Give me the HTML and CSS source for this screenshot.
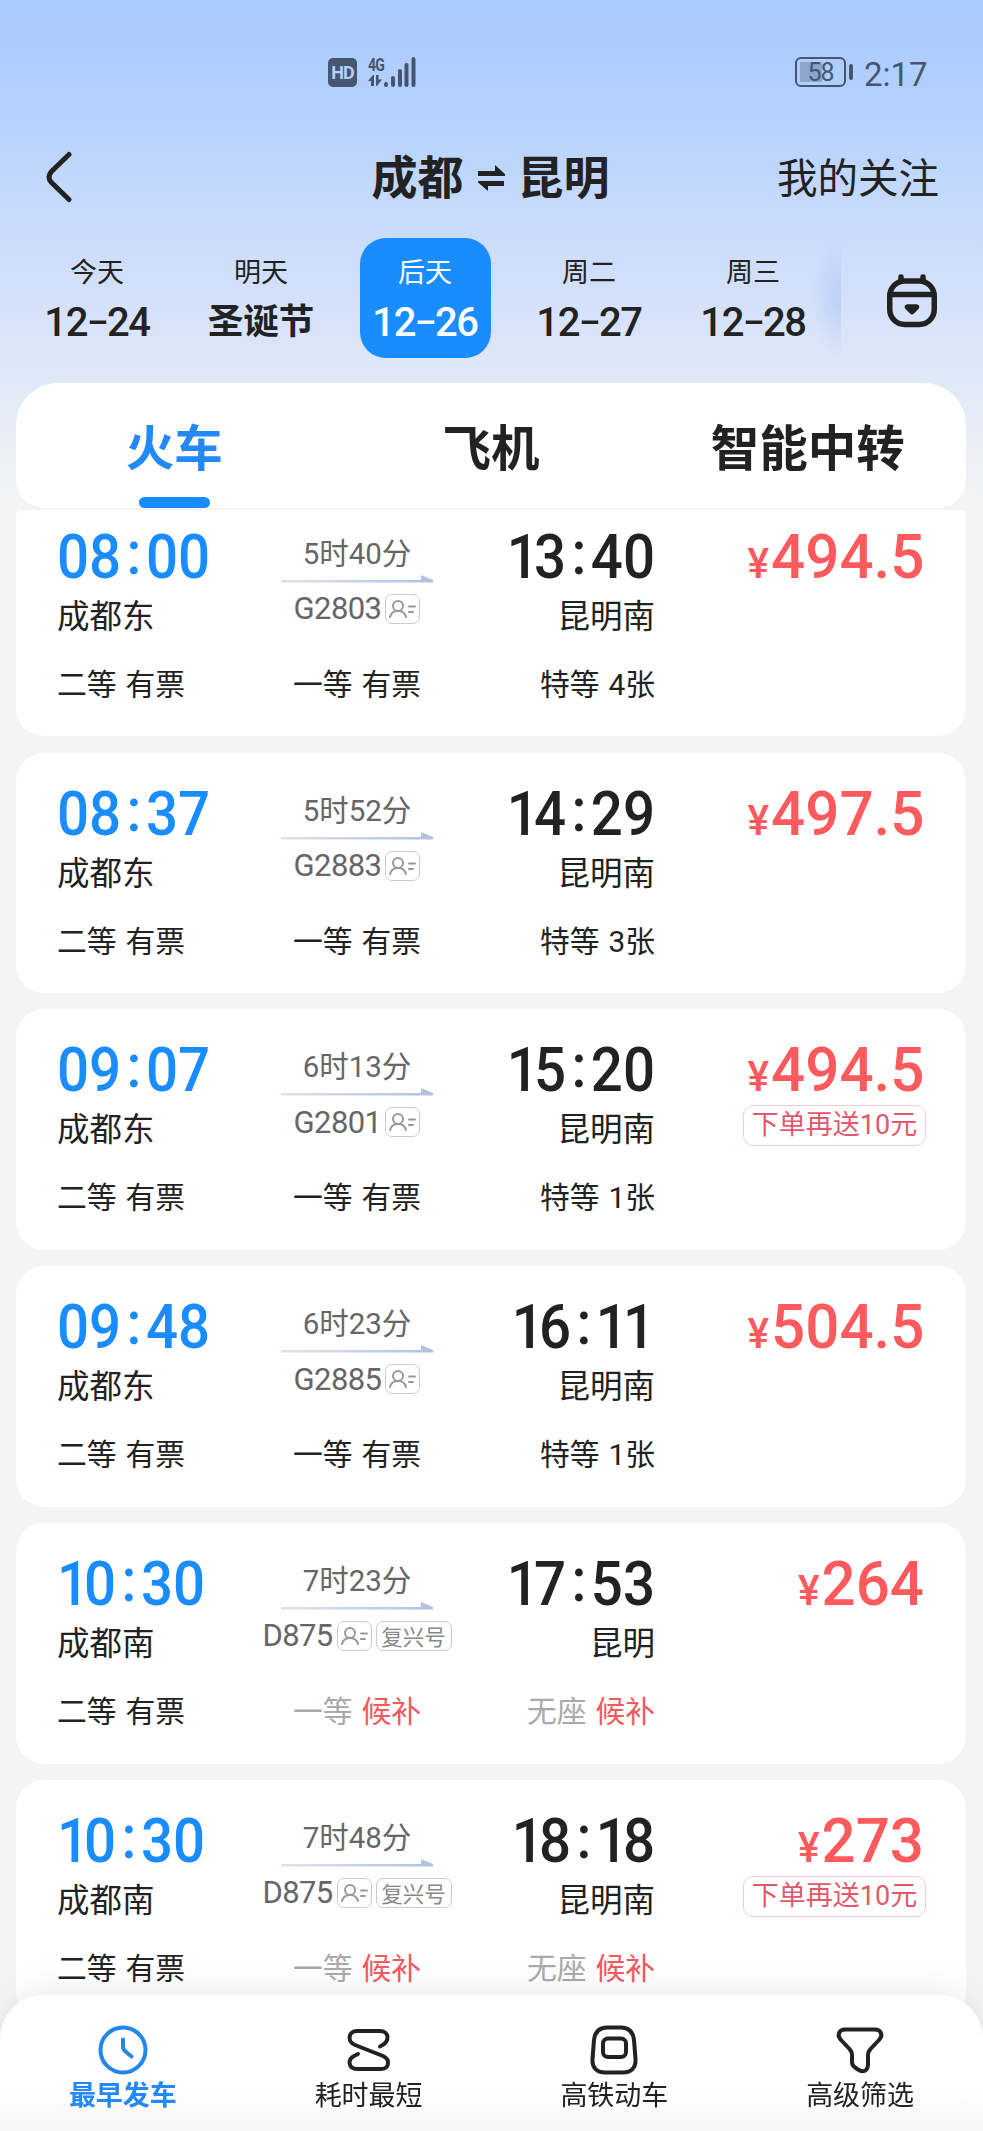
FILE: index.html
```html
<!DOCTYPE html>
<html lang="zh-CN">
<head>
    <meta charset="UTF-8">
    <meta name="viewport" content="width=device-width, initial-scale=1.0">
    <title>成都 - 昆明</title>
    <link rel="stylesheet" href="styles.css">
</head>
<body>
    <header>
        <div class="status-bar">
            <div class="signal">
                <span class="hd">HD</span>
                <span class="network">
                    <span class="network-type">4G</span>
                    <svg width="14" height="12" viewBox="0 0 14 12" fill="#46566f"><path d="M0 6L5 0h1v11H3V6zM8 0h2.6v4.5H14L9 11H8z"/></svg>
                </span>
                <svg class="bars" width="32" height="30" viewBox="0 0 32 30" stroke="#46566f" stroke-width="4" stroke-linecap="round"><path d="M2 27v1M9 21v7M16 14v14M22.500 8v20M29.500 2v26"/></svg>
            </div>
            <div class="power">
                <span class="battery"><span>58</span></span>
                <span class="battery-cap"></span>
                <span class="clock">2:17</span>
            </div>
        </div>

        <div class="title-bar">
            <svg width="28" height="54" viewBox="0 0 28 54" fill="none" stroke="#222" stroke-width="5" stroke-linecap="round"><path d="M23 4.500L5.500 21.500q-5 5.500 0 11L23 49.500"/></svg>
            <h1>
                <span>成都</span>
                <svg width="28" height="28" viewBox="0 0 28 28" fill="#222"><path d="M1 7h17V1l10 9v2H1zM27 17v5H11v5L1 18.500V17z"/></svg>
                <span>昆明</span>
            </h1>
            <a class="follow">我的关注</a>
        </div>

        <div class="date-bar">
            <div class="dates">
                <div class="date"><span>今天</span><b>12<i>-</i>24</b></div>
                <div class="date"><span>明天</span><b class="festival">圣诞节</b></div>
                <div class="date active"><span>后天</span><b>12<i>-</i>26</b></div>
                <div class="date"><span>周二</span><b>12<i>-</i>27</b></div>
                <div class="date"><span>周三</span><b>12<i>-</i>28</b></div>
            </div>
            <div class="calendar">
                <svg width="50" height="54" viewBox="0 0 50 54" fill="none" stroke="#222" stroke-width="5.500" stroke-linecap="round"><rect x="2.750" y="7" width="44.500" height="43.500" rx="15"/><path d="M14 3v4M36 3v4M4 20.500h42"/><path d="M20.500 33h9L25 37.500z" fill="#222" stroke-linejoin="round"/></svg>
            </div>
        </div>

        <nav class="tabs">
            <a class="tab active">火车</a>
            <a class="tab">飞机</a>
            <a class="tab">智能中转</a>
        </nav>
    </header>

    <main id="trainList"></main>

    <footer>
        <div class="sort active">
            <svg width="50" height="50" viewBox="0 0 50 50" fill="none" stroke="#2386ee" stroke-width="4" stroke-linecap="round"><circle cx="25" cy="25" r="22.500"/><path d="M25 14.500v7q0 3 2.500 5l6 5"/></svg>
            <span>最早发车</span>
        </div>
        <div class="sort">
            <svg width="50" height="50" viewBox="0 0 50 50" fill="none" stroke="#222" stroke-width="4" stroke-linecap="round"><path d="M36 21.500c11-5 9-15.500 0-15.500H13C4 6 3 17 11 20l28 11c8 4 6 13-2 13H13c-9 0-10-10-2-13.500l3-1.500"/></svg>
            <span>耗时最短</span>
        </div>
        <div class="sort">
            <svg width="50" height="50" viewBox="0 0 50 50" fill="none" stroke="#222" stroke-width="4"><path d="M18 2.500h14C40 2.500 44 7 45 15l1.500 19C47 43 42 47.500 34 47.500H16C8 47.500 3 43 3.500 34L5 15c1-8 5-12.500 13-12.500z"/><rect x="14" y="13.500" width="23" height="18.500" rx="5"/></svg>
            <span>高铁动车</span>
        </div>
        <div class="sort">
            <svg width="50" height="50" viewBox="0 0 50 50" fill="none" stroke="#222" stroke-width="4" stroke-linejoin="round"><path d="M10 4.500h30c6 0 8.500 6 4 10.500L35.500 24c-2 2-2.500 3-2.500 6v9c0 7-5 9-10 5.500l-3-2c-2-1.500-3-3-3-5.500v-7c0-3-.5-4-2.500-6L6 15C1.500 10.500 4 4.500 10 4.500z"/></svg>
            <span>高级筛选</span>
        </div>
    </footer>

    <script src="script.js"></script>
</body>
</html>
```

FILE: styles.css
```css
* {
    box-sizing: border-box;
}
body {
    margin: 0;
    height: 2131px;
    overflow: hidden;
    font-family: Roboto, "Noto Sans CJK SC", sans-serif;
    color: #222;
    background: linear-gradient(#a9cafd 0, #b3d0fe 100px, #c8dbfb 220px, #d3e0fb 290px, #e0e9f8 380px, #f4f4f4 505px);
}
svg {
    display: block;
    flex: none;
}
header {
    height: 508px;
}
.status-bar {
    display: flex;
    justify-content: space-between;
    height: 115px;
    padding: 57px 55px 0 328px;
    color: #46566f;
}
.signal, .power {
    display: flex;
    height: 30px;
}
.hd {
    width: 29px;
    height: 29px;
    margin-top: 1px;
    border-radius: 5px;
    background-color: #46566f;
    color: #b3d0fe;
    font-size: 18px;
    font-weight: 700;
    line-height: 30px;
    text-align: center;
    letter-spacing: -1px;
}
.network {
    width: 17px;
    margin-left: 11px;
}
.network-type {
    display: block;
    height: 18px;
    font-size: 18px;
    font-weight: 700;
    line-height: 16px;
    letter-spacing: -1px;
    transform: scaleX(0.78);
    transform-origin: left;
}
.bars {
    margin-left: -1px;
}
.battery {
    width: 51px;
    height: 30px;
    border: 2.5px solid #46566f;
    border-radius: 6px;
    padding: 3px;
    font-size: 25px;
    line-height: 21px;
    text-align: center;
}
.battery span {
    display: block;
    height: 20px;
    letter-spacing: -1px;
    background: linear-gradient(90deg, #8ca5cf 22px, transparent 22px);
}
.battery-cap {
    width: 4px;
    height: 16px;
    margin: 7px 11px 0 3px;
    border-radius: 2px;
    background-color: #46566f;
}
.clock {
    width: 64px;
    font-size: 33px;
    line-height: 35px;
    white-space: nowrap;
}
.title-bar {
    display: flex;
    align-items: center;
    justify-content: space-between;
    height: 122px;
    padding: 1px 44px 0 46px;
}
h1 {
    display: flex;
    align-items: center;
    gap: 13px;
    margin: 0 0 0 130px;
    padding-top: 3px;
    font-size: 46px;
    line-height: 60px;
}
.follow {
    padding-bottom: 3px;
    font-size: 40.5px;
}
.date-bar {
    display: flex;
    height: 120px;
    padding-left: 15px;
}
.dates {
    display: flex;
    width: 826px;
    margin-top: 1px;
    position: relative;
}
/* fade at the scroll edge */
.dates:after {
    content: '';
    position: absolute;
    right: 0;
    top: 0;
    width: 30px;
    height: 120px;
    background: radial-gradient(ellipse at right, rgba(170, 197, 243, 0.6), rgba(170, 197, 243, 0) 70%);
}
.date {
    display: flex;
    flex-direction: column;
    align-items: center;
    width: 131px;
    height: 120px;
    margin: 0 16.5px;
    border-radius: 26px;
    flex: none;
}
.date.active {
    background-color: #198cff;
    color: white;
}
.date span {
    margin-top: 17px;
    font-size: 27px;
    line-height: 36px;
}
.date b {
    font-size: 40px;
    font-weight: 500;
    line-height: 62px;
    letter-spacing: -1.4px;
}
.date i {
    display: inline-block;
    width: 20px;
    text-align: center;
    font-style: normal;
    transform: scale(1.6, 0.9);
    vertical-align: 1px;
}
.date .festival {
    font-size: 35.5px;
    font-weight: 700;
    letter-spacing: 0;
}
.calendar {
    padding: 37px 0 0 46px;
}
.tabs {
    display: flex;
    height: 125px;
    margin: 26px 17px 0 16px;
    border-radius: 42px 42px 28px 28px;
    background-color: white;
}
.tab {
    display: flex;
    flex-direction: column;
    align-items: center;
    flex: 1;
    font-size: 48.5px;
    font-weight: 700;
    line-height: 133px;
}
.tab.active {
    color: #2389f6;
}
.tab.active:after {
    content: '';
    width: 71px;
    height: 11px;
    margin-top: -19px;
    border-radius: 6px;
    background-color: #198cff;
}
main {
    display: flex;
    flex-direction: column;
    gap: 16.2px;
    height: 1623px;
    padding: 2px 17px 0 16px;
    background-color: #f4f4f4;
    overflow: hidden;
}
.train {
    flex: none;
    height: 240.6px;
    padding: 28px 42px 0 41px;
    border-radius: 28px;
    background-color: white;
}
/* the first card is scrolled partly under the tabs */
.train:first-child {
    height: 226.4px;
    padding-top: 13.8px;
    border-radius: 5px 5px 28px 28px;
}
.trip, .seats {
    display: grid;
    grid-template-columns: 200px 200px 198px 1fr;
}
.trip {
    height: 138px;
}
.time {
    height: 64px;
    font-size: 62px;
    font-weight: 500;
    line-height: 65px;
    white-space: nowrap;
    transform: scaleX(0.91);
    transform-origin: left;
}
.depart .time {
    color: #198cff;
}
.arrive .time {
    transform-origin: right;
}
.time .one {
    letter-spacing: -5.5px;
}
.time .colon {
    margin: 0 5px 0 6px;
    vertical-align: 4px;
    line-height: 0;
}
.arrive {
    text-align: right;
}
.station {
    padding-top: 2px;
    font-size: 32.5px;
    line-height: 55px;
}
.line {
    display: flex;
    flex-direction: column;
    align-items: center;
    color: #666;
}
.duration {
    height: 51px;
    padding-top: 9px;
    font-size: 29.5px;
    line-height: 42px;
}
.number {
    display: flex;
    align-items: center;
    height: 36px;
    margin-top: 8px;
    font-size: 31px;
    letter-spacing: -0.6px;
}
.card-tag, .fuxing {
    display: flex;
    align-items: center;
    justify-content: center;
    width: 35px;
    height: 30px;
    margin-left: 4px;
    border: 1.5px solid #ccc;
    border-radius: 7px;
}
.fuxing {
    width: 76px;
    color: #888;
    font-size: 21.5px;
    letter-spacing: 0;
}
.price {
    display: flex;
    flex-direction: column;
    align-items: flex-end;
    color: #fc5a5c;
}
.price .amount {
    height: 68px;
    font-size: 62px;
    font-weight: 500;
    line-height: 65px;
    transform: scaleX(0.97);
    transform-origin: right;
}
.price small {
    margin-right: 2px;
    font-size: 42px;
}
.promo {
    width: 183px;
    height: 41px;
    margin-right: -2px;
    border: 1.5px solid #f9c9d1;
    border-radius: 10px;
    color: #e2596b;
    font-size: 27px;
    line-height: 39px;
    text-align: center;
    white-space: nowrap;
}
.seats {
    padding-top: 1px;
    font-size: 29.8px;
    line-height: 44px;
    word-spacing: 1.5px;
}
.seats div:nth-child(2) {
    text-align: center;
}
.seats div:nth-child(3) {
    text-align: right;
}
.waiting {
    color: #aaa;
}
.waiting span {
    color: #f25a5e;
}
footer {
    position: fixed;
    left: 0;
    right: 0;
    bottom: 0;
    display: flex;
    height: 136px;
    padding-top: 30px;
    border-radius: 44px 44px 0 0;
    background: linear-gradient(white 70%, #f6f6f6);
    box-shadow: 0 -4px 36px rgba(0, 0, 0, 0.08);
}
.sort {
    display: flex;
    flex-direction: column;
    align-items: center;
    flex: 1;
    font-size: 27px;
    line-height: 43px;
}
.sort.active {
    color: #2389f6;
    font-weight: 700;
}
```

FILE: script.js
```javascript
const trains = [
    { depart: "08:00", from: "成都东", duration: "5时40分", number: "G2803", arrive: "13:40", to: "昆明南", price: "494.5", seats: ["二等 有票", "一等 有票", "特等 4张"] },
    { depart: "08:37", from: "成都东", duration: "5时52分", number: "G2883", arrive: "14:29", to: "昆明南", price: "497.5", seats: ["二等 有票", "一等 有票", "特等 3张"] },
    { depart: "09:07", from: "成都东", duration: "6时13分", number: "G2801", arrive: "15:20", to: "昆明南", price: "494.5", promo: "下单再送10元", seats: ["二等 有票", "一等 有票", "特等 1张"] },
    { depart: "09:48", from: "成都东", duration: "6时23分", number: "G2885", arrive: "16:11", to: "昆明南", price: "504.5", seats: ["二等 有票", "一等 有票", "特等 1张"] },
    { depart: "10:30", from: "成都南", duration: "7时23分", number: "D875", fuxing: true, arrive: "17:53", to: "昆明", price: "264", seats: ["二等 有票", "一等 候补", "无座 候补"] },
    { depart: "10:30", from: "成都南", duration: "7时48分", number: "D875", fuxing: true, arrive: "18:18", to: "昆明南", price: "273", promo: "下单再送10元", seats: ["二等 有票", "一等 候补", "无座 候补"] }
];

const arrow = `<svg width="152" height="8" viewBox="0 0 152 8"><defs><linearGradient id="fade"><stop offset="0" stop-color="#dfe4ea"/><stop offset="1" stop-color="#adc2e0"/></linearGradient></defs><path d="M0 5h140V0l12 5v2.500H0z" fill="url(#fade)"/></svg>`;
const idCard = `<span class="card-tag"><svg width="27" height="18" viewBox="0 0 27 18" fill="none" stroke="#999" stroke-width="2" stroke-linecap="round"><circle cx="9" cy="6" r="5"/><path d="M1 17c1-4 4-6 8-6s7 2 8 6M20 6.500h6M20 12h4"/></svg></span>`;

// the "1" is set tighter than the other digits
function formatTime(time) {
    return time.replace(/1(?!$)|:/g, c => `<span class="${c === '1' ? 'one' : 'colon'}">${c}</span>`);
}

function formatSeat(seat) {
    const [type, left] = seat.split(" ");
    if (left === "候补") {
        return `<div class="waiting">${type} <span>${left}</span></div>`;
    }
    return `<div>${seat}</div>`;
}

document.getElementById('trainList').innerHTML = trains.map(train => `
    <section class="train">
        <div class="trip">
            <div class="depart">
                <div class="time">${formatTime(train.depart)}</div>
                <div class="station">${train.from}</div>
            </div>
            <div class="line">
                <div class="duration">${train.duration}</div>
                ${arrow}
                <div class="number">${train.number}${idCard}${train.fuxing ? '<span class="fuxing">复兴号</span>' : ''}</div>
            </div>
            <div class="arrive">
                <div class="time">${formatTime(train.arrive)}</div>
                <div class="station">${train.to}</div>
            </div>
            <div class="price">
                <div class="amount"><small>¥</small>${train.price}</div>
                ${train.promo ? `<div class="promo">${train.promo}</div>` : ''}
            </div>
        </div>
        <div class="seats">${train.seats.map(formatSeat).join('')}</div>
    </section>
`).join('');
```
